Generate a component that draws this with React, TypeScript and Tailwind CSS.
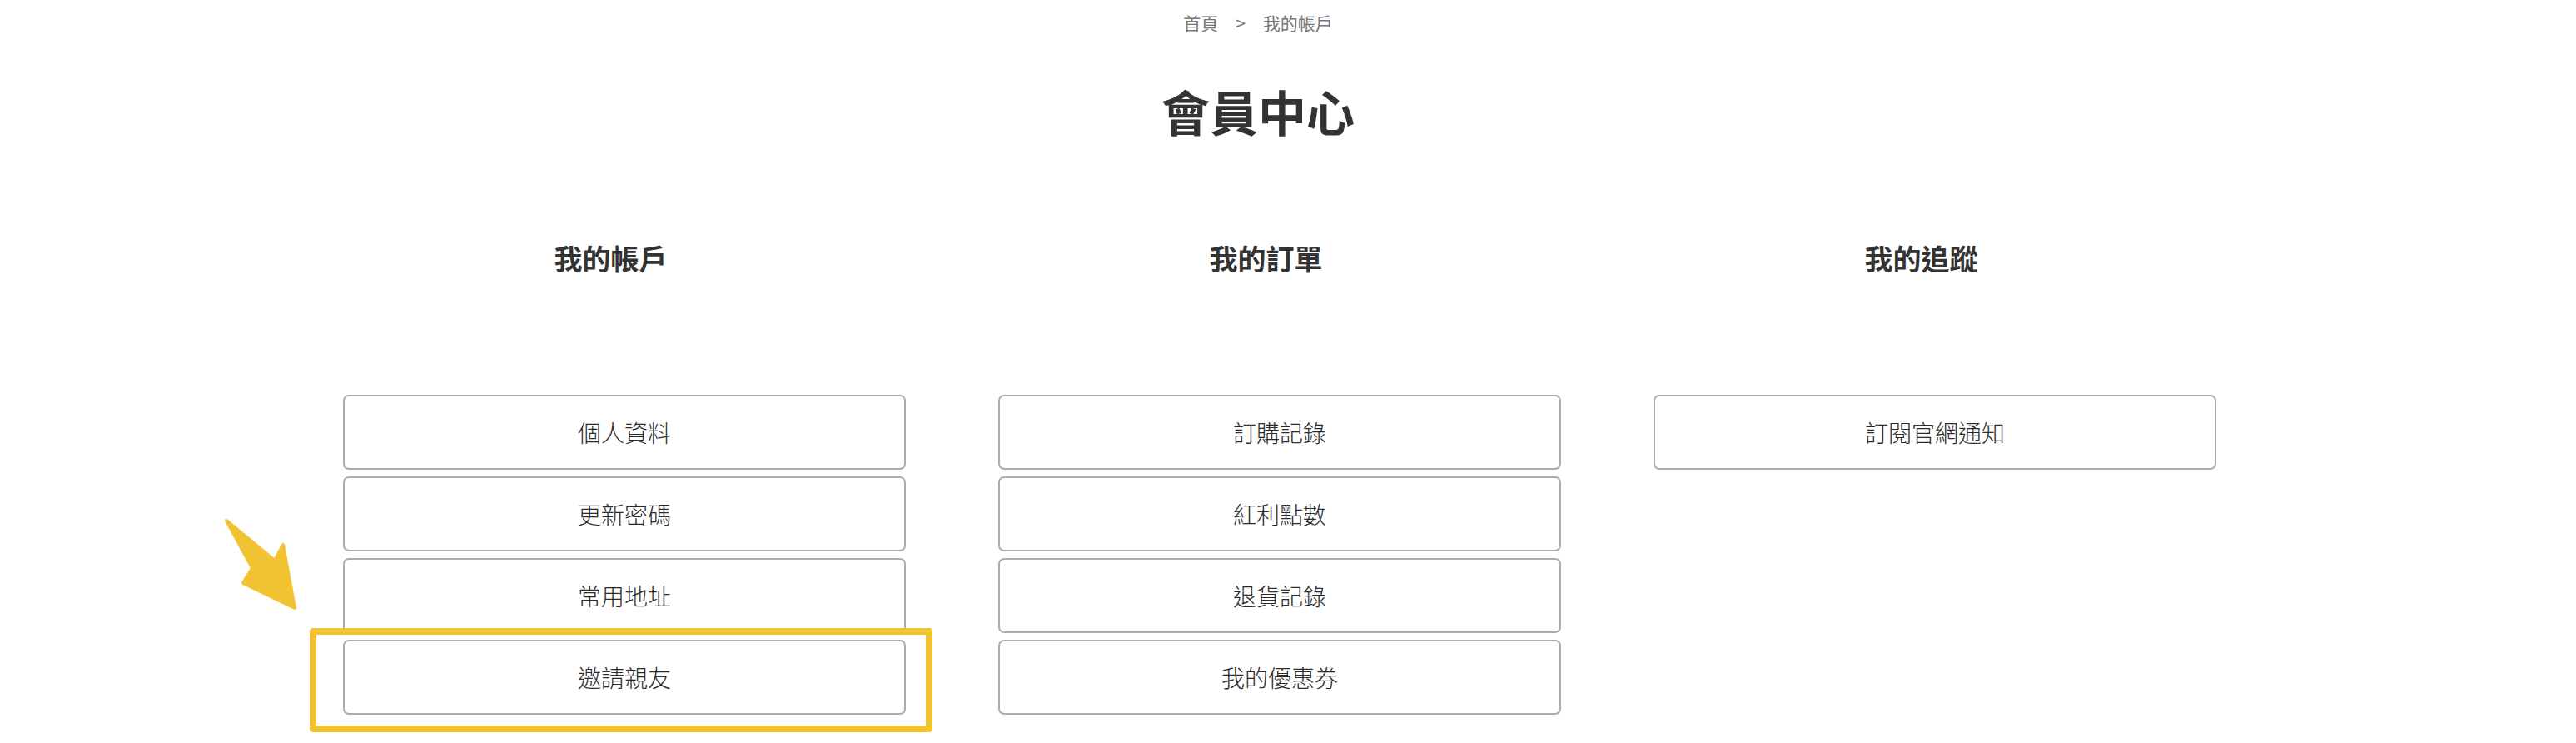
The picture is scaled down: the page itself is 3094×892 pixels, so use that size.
import React from 'react';

const font = { fontFamily: '"Noto Sans CJK TC", "Noto Sans", sans-serif' };

const columns = [
  { title: '我的帳戶', items: ['個人資料', '更新密碼', '常用地址', '邀請親友'] },
  { title: '我的訂單', items: ['訂購記錄', '紅利點數', '退貨記錄', '我的優惠券'] },
  { title: '我的追蹤', items: ['訂閱官網通知'] },
];

const MenuButton: React.FC<{ label: string }> = ({ label }) => (
  <div className="h-[90px] w-[676px] mb-[8px] flex items-center justify-center rounded-[7px] border-2 border-[#ababab] bg-white text-[28px] font-light text-[#2b2b2b]">
    {label}
  </div>
);

const App: React.FC = () => {
  return (
    <div className="relative w-[3094px] h-[892px] bg-white overflow-hidden" style={font}>
      <div className="w-[3022px] pt-[12px] text-center">
        <div className="flex justify-center items-center gap-[21px] text-[21px] leading-[30px] text-[#777]">
          <span>首頁</span>
          <span>&gt;</span>
          <span>我的帳戶</span>
        </div>
        <h1 className="mt-[56px] text-[58px] leading-[70px] font-bold text-[#333]">會員中心</h1>
      </div>

      <div className="ml-[340px] w-[2361px] mt-[120px] flex">
        {columns.map((col) => (
          <div key={col.title} className="w-[787px]">
            <h2 className="text-center text-[34px] leading-[44px] font-bold text-[#333]">{col.title}</h2>
            <div className="mt-[142px] pl-[72px]">
              {col.items.map((item) => (
                <MenuButton key={item} label={item} />
              ))}
            </div>
          </div>
        ))}
      </div>

      {/* highlight annotation */}
      <div className="absolute left-[372px] top-[754px] w-[748px] h-[125px] border-[8px] border-[#f1c232] rounded-[4px]" />
      <svg className="absolute left-0 top-0" width="400" height="760" viewBox="0 0 400 760">
        <polygon
          points="272,625 330,673 340,654 354,730 292,700 303,682"
          fill="#f1c232"
          stroke="#f1c232"
          strokeWidth="4"
          strokeLinejoin="round"
        />
      </svg>
    </div>
  );
};

export default App;
